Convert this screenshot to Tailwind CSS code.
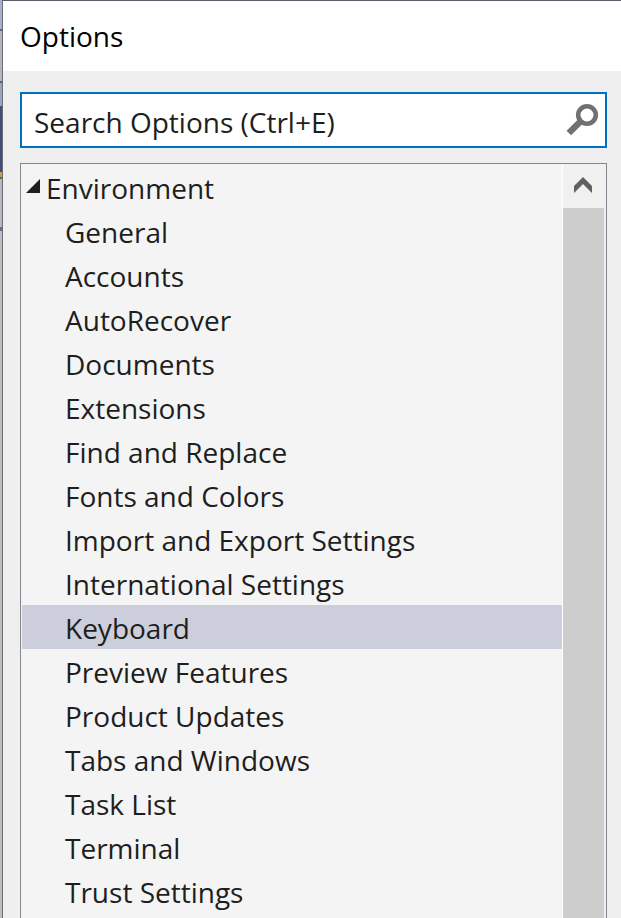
<!DOCTYPE html>
<html lang="en">
<head>
<meta charset="utf-8">
<meta name="viewport" content="width=device-width, initial-scale=1">
<title>Options</title>
<script src="https://cdn.jsdelivr.net/npm/@tailwindcss/browser@4"></script>
</head>
<body class="flex h-screen overflow-hidden bg-[#efefef] font-['Open_Sans','Noto_Sans',sans-serif] text-[28px] leading-[42px] text-[#1e1e1e]">
  <!-- Sliver of the window behind the dialog -->
  <div class="flex w-[2px] shrink-0 flex-col" aria-hidden="true">
    <div class="h-[29px] bg-[#a9afd0]"></div>
    <div class="h-[2px] bg-[#5c6270]"></div>
    <div class="h-[50px] bg-[#b1b7bc]"></div>
    <div class="h-[2px] bg-[#5a6078]"></div>
    <div class="h-[23px] bg-[#9ba2c2]"></div>
    <div class="h-[66px] bg-[#444c7c]"></div>
    <div class="h-[5px] bg-[#c79d55]"></div>
    <div class="h-[2px] bg-[#5c6270]"></div>
    <div class="h-[48px] bg-[#b5b8be]"></div>
    <div class="h-[4px] bg-[#5f6a9c]"></div>
    <div class="grow bg-[#bcbdc0]"></div>
  </div>

  <main class="flex min-w-0 grow flex-col border-t border-l border-t-[#5b5d69] border-l-[#6b6d70]">
    <header class="flex h-[70px] shrink-0 items-center bg-white px-[17px]">
      <h1 class="text-black">Options</h1>
    </header>

    <div class="flex min-h-0 grow flex-col pt-[21px] pr-[14px] pl-[17px]">
      <form class="flex h-14 shrink-0 items-center border-2 border-[#0070c0] bg-white pr-1" role="search">
        <input type="text" aria-label="Search Options" placeholder="Search Options (Ctrl+E)" class="h-full min-w-0 grow bg-transparent pt-1 pl-3 outline-none placeholder:text-[#1e1e1e] placeholder:opacity-100">
        <button type="submit" aria-label="Search" class="shrink-0">
          <svg class="h-9 w-9" viewBox="0 0 36 36" fill="none" stroke="#717171">
            <circle cx="22" cy="13" r="8.8" stroke-width="4.6"/>
            <path d="M15.5 19.5 3.8 31" stroke-width="6.4"/>
          </svg>
        </button>
      </form>

      <section class="mt-[15px] flex min-h-0 grow border border-b-0 border-[#828790] bg-[#f4f4f4]">
        <nav aria-label="Options categories" class="min-w-0 grow overflow-hidden pt-px pl-px">
          <button type="button" aria-expanded="true" class="flex h-11 w-full items-center gap-[6px] pt-[2px] pl-1 text-left">
            <svg class="mb-1 h-[14px] w-[14px] shrink-0" viewBox="0 0 14 14" fill="#1e1e1e"><path d="M14 0V14H0Z"/></svg>
            <span>Environment</span>
          </button>
          <ul class="whitespace-nowrap">
            <li><button type="button" class="block h-11 w-full pt-[2px] pl-[43px] text-left">General</button></li>
            <li><button type="button" class="block h-11 w-full pt-[2px] pl-[43px] text-left">Accounts</button></li>
            <li><button type="button" class="block h-11 w-full pt-[2px] pl-[43px] text-left">AutoRecover</button></li>
            <li><button type="button" class="block h-11 w-full pt-[2px] pl-[43px] text-left">Documents</button></li>
            <li><button type="button" class="block h-11 w-full pt-[2px] pl-[43px] text-left">Extensions</button></li>
            <li><button type="button" class="block h-11 w-full pt-[2px] pl-[43px] text-left">Find and Replace</button></li>
            <li><button type="button" class="block h-11 w-full pt-[2px] pl-[43px] text-left">Fonts and Colors</button></li>
            <li><button type="button" class="block h-11 w-full pt-[2px] pl-[43px] text-left">Import and Export Settings</button></li>
            <li><button type="button" class="block h-11 w-full pt-[2px] pl-[43px] text-left">International Settings</button></li>
            <li><button type="button" aria-current="true" class="block h-11 w-full bg-[#cccedb] pt-[2px] pl-[43px] text-left">Keyboard</button></li>
            <li><button type="button" class="block h-11 w-full pt-[2px] pl-[43px] text-left">Preview Features</button></li>
            <li><button type="button" class="block h-11 w-full pt-[2px] pl-[43px] text-left">Product Updates</button></li>
            <li><button type="button" class="block h-11 w-full pt-[2px] pl-[43px] text-left">Tabs and Windows</button></li>
            <li><button type="button" class="block h-11 w-full pt-[2px] pl-[43px] text-left">Task List</button></li>
            <li><button type="button" class="block h-11 w-full pt-[2px] pl-[43px] text-left">Terminal</button></li>
            <li><button type="button" class="block h-11 w-full pt-[2px] pl-[43px] text-left">Trust Settings</button></li>
          </ul>
        </nav>
        <div class="flex w-11 shrink-0 flex-col border-l border-white bg-[#f0f0f0] pr-[2px]">
          <button type="button" aria-label="Scroll up" class="flex h-11 shrink-0 items-center justify-center pr-[2px] pb-[2px]">
            <svg class="h-[16px] w-[18px]" viewBox="0 0 18 16" fill="#606060"><path d="M9 0 18 9V16L9 7 0 16V9Z"/></svg>
          </button>
          <div class="grow bg-[#cdcdcd]"></div>
        </div>
      </section>
    </div>
  </main>
</body>
</html>
